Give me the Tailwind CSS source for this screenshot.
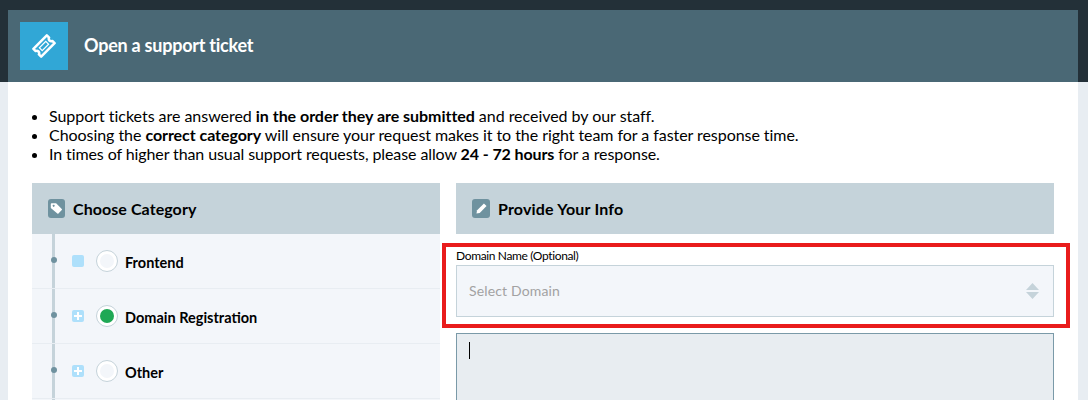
<!DOCTYPE html>
<html lang="en">
<head>
  <meta charset="UTF-8" />
  <meta name="viewport" content="width=device-width, initial-scale=1.0" />
  <title>Open a support ticket</title>
  <script src="https://cdn.jsdelivr.net/npm/@tailwindcss/browser@4"></script>
</head>
<body class="h-screen overflow-hidden bg-[#e8edf2] font-['Lato',sans-serif] text-black">
  <!-- header -->
  <div class="bg-[#233038] pt-[10px] pl-2 pr-[10px]">
    <div class="h-[72px] bg-[#4a6875] pl-3 flex items-center gap-4">
      <div class="size-12 bg-[#31a7d6] flex items-center justify-center">
        <svg viewBox="0 0 24 24" class="size-[24px]" fill="none" stroke="#fff">
          <g transform="rotate(-45 12 12)">
            <path stroke-width="2.500" stroke-linejoin="round" d="M2.500 6.500h19v3.200a2.400 2.400 0 0 0 0 4.600v3.200h-19v-3.200a2.400 2.400 0 0 0 0-4.600z" />
            <rect x="7.500" y="10" width="9" height="4" stroke-width="1.200" />
          </g>
        </svg>
      </div>
      <h1 class="text-[18px] font-bold text-white tracking-[-0.24px] mb-[2px]">Open a support ticket</h1>
    </div>
  </div>

  <div class="pl-2 pr-[10px]">
    <div class="bg-white px-6 pt-[24px] h-[318px]">
      <ul class="list-disc pl-[17px] text-[16px] leading-[19px] h-[59px]">
        <li class="tracking-[-0.035px]">Support tickets are answered <b>in the order they are submitted</b> and received by our staff.</li>
        <li class="tracking-[-0.055px]">Choosing the <b>correct category</b> will ensure your request makes it to the right team for a faster response time.</li>
        <li class="tracking-[-0.1px]">In times of higher than usual support requests, please allow <b>24 - 72 hours</b> for a response.</li>
      </ul>

      <div class="grid grid-cols-[408px_1fr] gap-4 mt-[18px]">
        <!-- category column -->
        <div>
          <div class="h-[51px] bg-[#c5d3da] pl-4 flex items-center gap-2">
            <span class="w-[17px] h-[19px] rounded-[3px] bg-[#6f929f] flex items-center justify-center">
              <svg viewBox="0 0 16 16" class="size-[13px]" fill="#fff" fill-rule="evenodd">
                <path d="M1 2.500a1 1 0 0 1 1-1h5.500l7 7a1 1 0 0 1 0 1.400l-4.100 4.100a1 1 0 0 1-1.400 0L1 7.500zM4.500 3.500a1.200 1.200 0 1 0 .01 0z" />
              </svg>
            </span>
            <h2 class="text-[16px] font-bold tracking-[0.07px]">Choose Category</h2>
          </div>
          <div class="relative bg-[#f3f6fa]">
            <div class="absolute left-5 top-0 bottom-0 w-[3px] bg-[#c5d3da]"></div>

            <div class="relative h-[55px] border-b border-[#e8edf2] pl-10 flex items-center">
              <span class="absolute left-[19px] top-[23px] size-[6px] rounded-full bg-[#6f929f]"></span>
              <span class="size-3 rounded-[2px] bg-[#aee0fb]"></span>
              <span class="ml-3 size-[22px] rounded-full border border-[#c5d3da] bg-white flex items-center justify-center">
                <span class="size-[14px] rounded-full bg-[#f3f6fa]"></span>
              </span>
              <span class="ml-[7px] text-[14.500px] font-bold mt-[3px]">Frontend</span>
            </div>

            <div class="relative h-[55px] border-b border-[#e8edf2] pl-10 flex items-center">
              <span class="absolute left-[19px] top-[23px] size-[6px] rounded-full bg-[#6f929f]"></span>
              <span class="size-3 rounded-[2px] bg-[#aee0fb] flex items-center justify-center">
                <svg viewBox="0 0 12 12" class="size-3" stroke="#fff" stroke-width="2"><path d="M6 2v8M2 6h8" /></svg>
              </span>
              <span class="ml-3 size-[22px] rounded-full border border-[#c5d3da] bg-white flex items-center justify-center">
                <span class="size-[14px] rounded-full bg-[#1fa855]"></span>
              </span>
              <span class="ml-[7px] text-[14.500px] font-bold mt-[3px]">Domain Registration</span>
            </div>

            <div class="relative h-[55px] border-b border-[#e8edf2] pl-10 flex items-center">
              <span class="absolute left-[19px] top-[23px] size-[6px] rounded-full bg-[#6f929f]"></span>
              <span class="size-3 rounded-[2px] bg-[#aee0fb] flex items-center justify-center">
                <svg viewBox="0 0 12 12" class="size-3" stroke="#fff" stroke-width="2"><path d="M6 2v8M2 6h8" /></svg>
              </span>
              <span class="ml-3 size-[22px] rounded-full border border-[#c5d3da] bg-white flex items-center justify-center">
                <span class="size-[14px] rounded-full bg-[#f3f6fa]"></span>
              </span>
              <span class="ml-[7px] text-[14.500px] font-bold mt-[3px]">Other</span>
            </div>
            <div class="h-5"></div>
          </div>
        </div>

        <!-- info column -->
        <div class="relative">
          <div class="h-[51px] bg-[#c5d3da] pl-4 flex items-center gap-2">
            <span class="w-[18px] h-[19px] rounded-[3px] bg-[#6f929f] flex items-center justify-center">
              <svg viewBox="0 0 16 16" class="size-[13px]" fill="#fff">
                <path d="M11 1.800l3.200 3.200-8.400 8.400-4 .8.800-4z" />
              </svg>
            </span>
            <h2 class="text-[16px] font-bold tracking-[0.18px]">Provide Your Info</h2>
          </div>
          <label class="block mt-[14px] mb-[1px] text-[12px] leading-[16px] tracking-[-0.36px]">Domain Name (Optional)</label>
          <div class="h-[52px] border border-[#c5d3da] bg-[#f3f6fa] pl-3 pr-[14px] flex items-center justify-between">
            <span class="text-[14px] text-[#a2a2a2] tracking-[0.15px] mb-[2px]">Select Domain</span>
            <svg viewBox="0 0 13 16" class="w-[13px] h-4" fill="#c5d3da"><path d="M6.500 0l6.500 7H0zM0 9h13l-6.500 7z" /></svg>
          </div>
          <div class="mt-4 h-[100px] border border-[#7a9aa8] bg-[#e8edf1] pl-3 pt-2">
            <div class="w-px h-[17px] bg-black"></div>
          </div>
          <!-- red annotation box -->
          <div class="absolute left-[-14px] top-[60px] w-[628px] h-[85px] border-4 border-[#e91c1c]"></div>
        </div>
      </div>
    </div>
  </div>
</body>
</html>
